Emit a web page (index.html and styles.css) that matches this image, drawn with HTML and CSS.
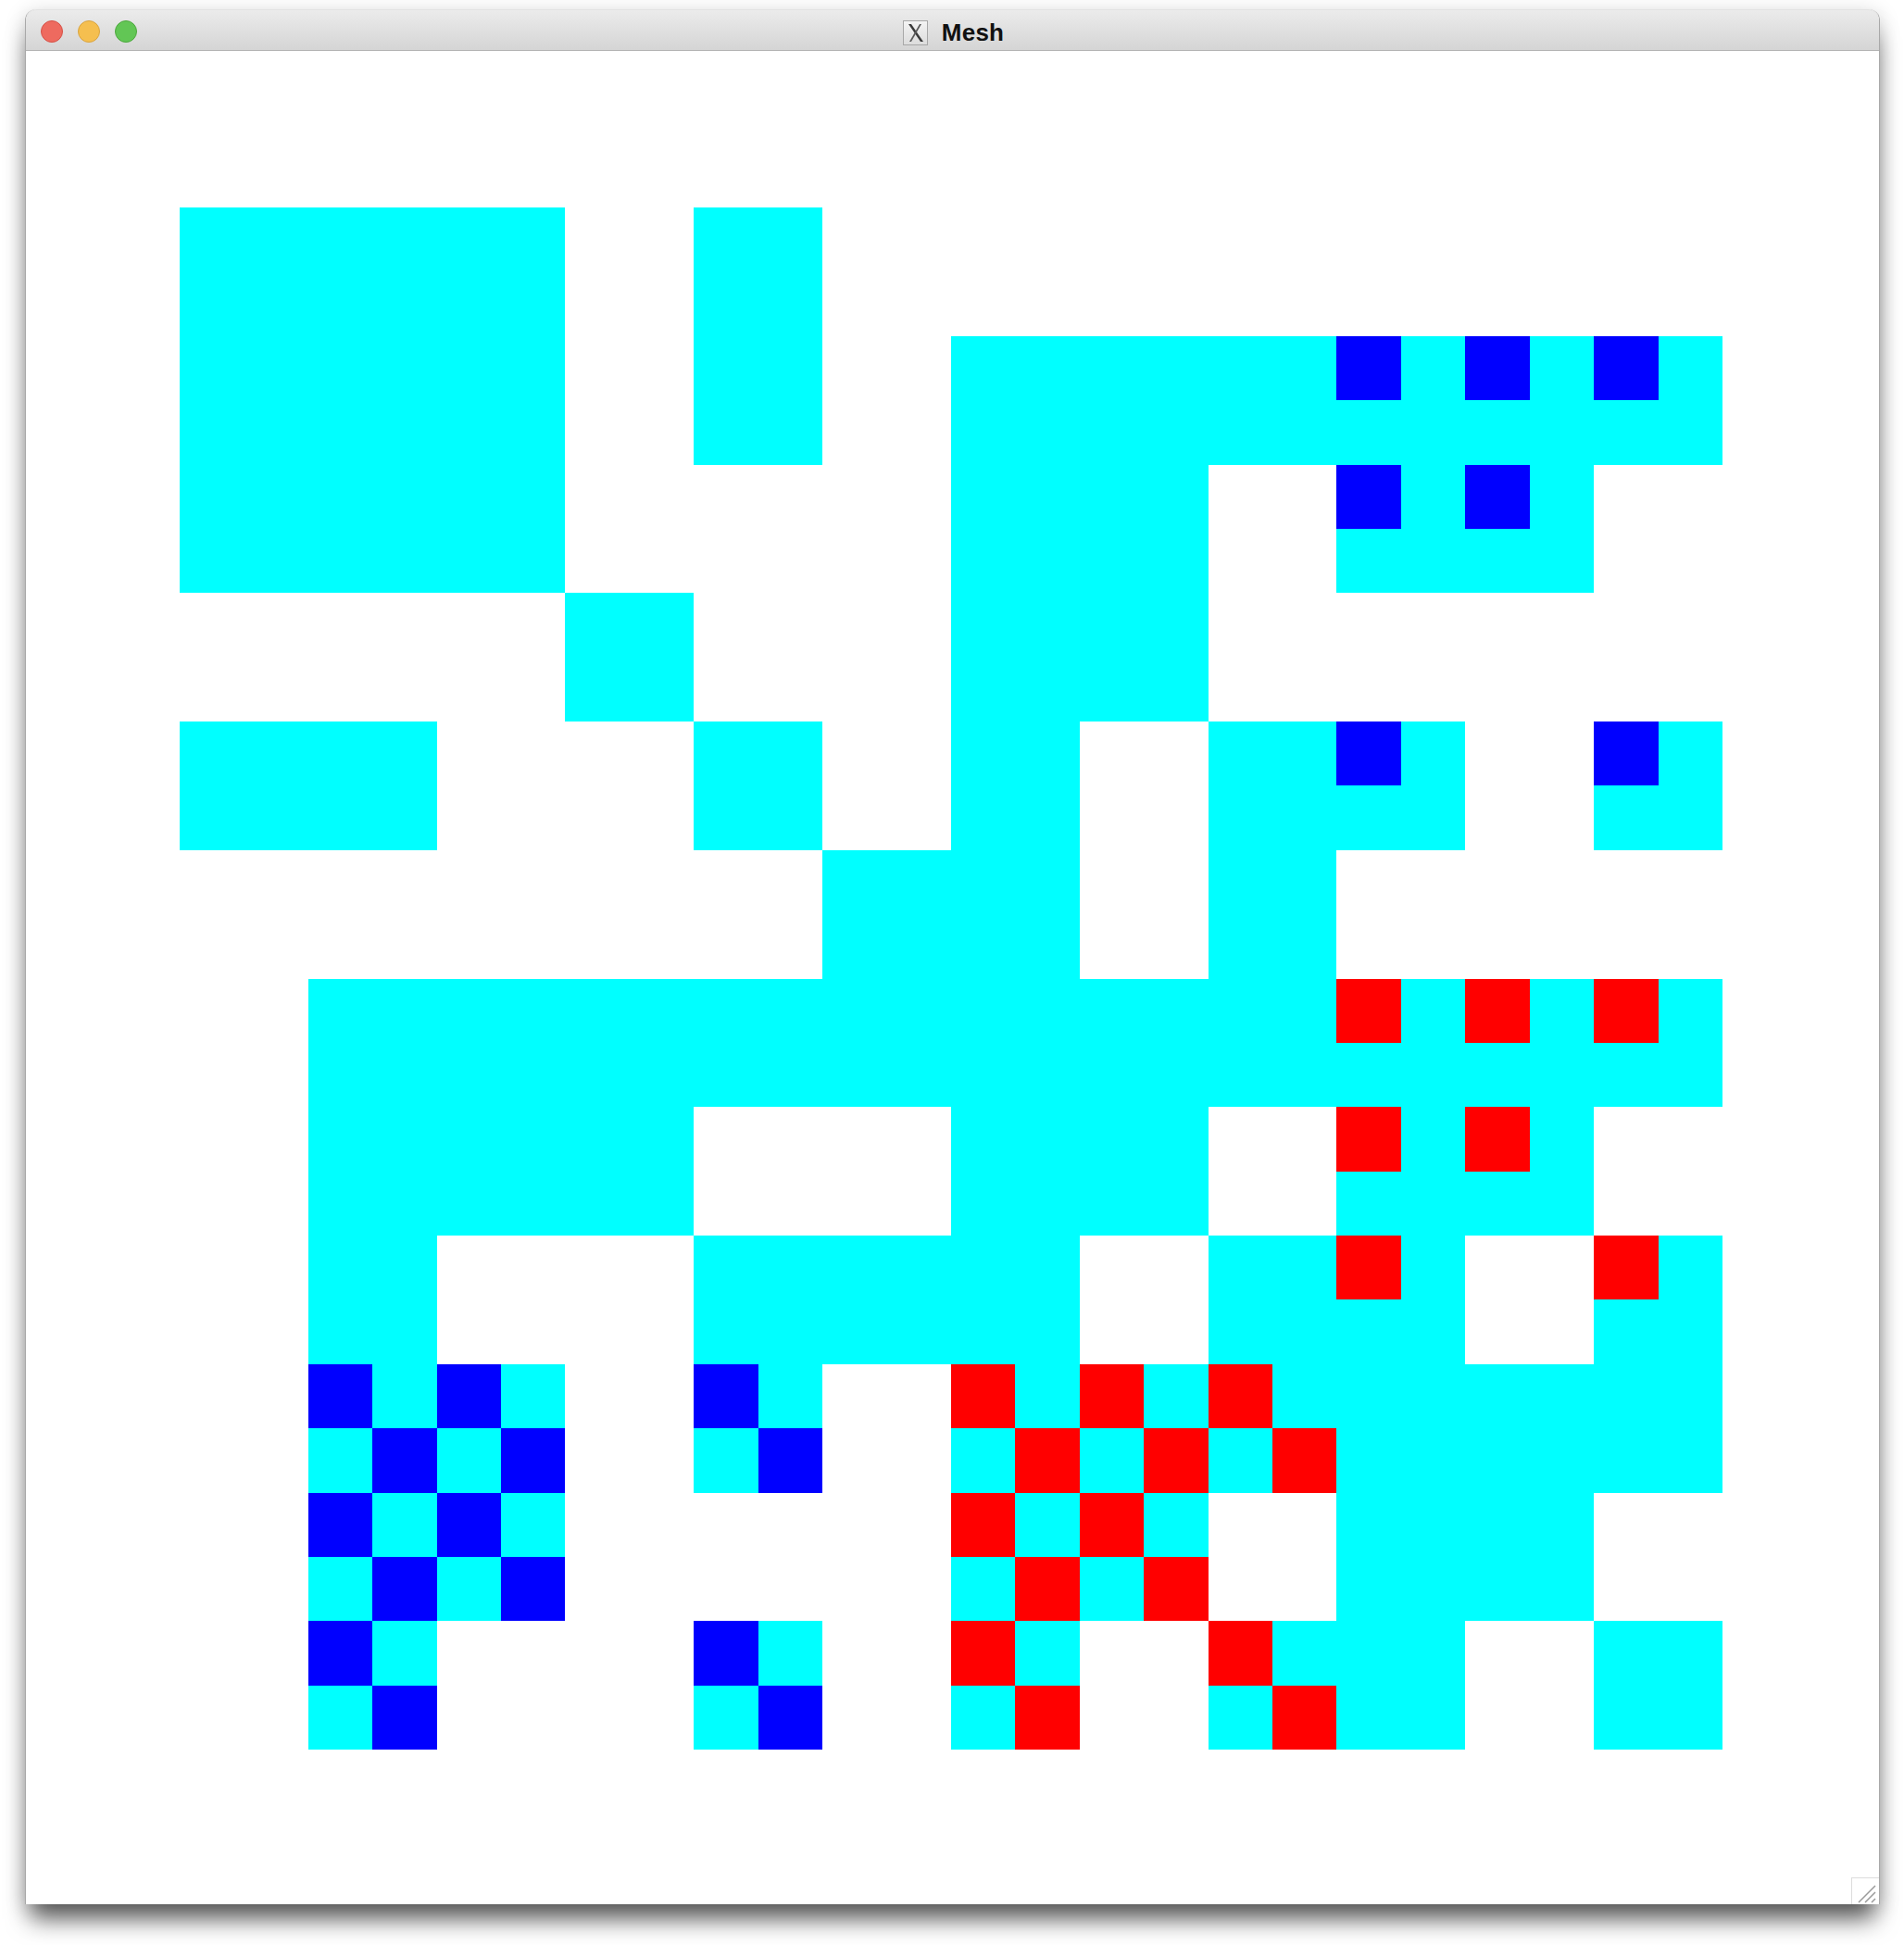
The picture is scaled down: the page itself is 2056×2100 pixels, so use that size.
FILE: index.html
```html
<!DOCTYPE html>
<html>
<head>
<meta charset="utf-8">
<title>Mesh</title>
<link rel="stylesheet" href="styles.css">
</head>
<body>
<div class="window">
  <div class="titlebar">
    <div class="lights">
      <span class="light red"></span>
      <span class="light yellow"></span>
      <span class="light green"></span>
    </div>
    <div class="title">
      <svg class="xicon" width="27" height="27" viewBox="0 0 27 27">
        <defs>
          <linearGradient id="xg" x1="0" y1="0" x2="0" y2="1">
            <stop offset="0" stop-color="#f4f4f4"/>
            <stop offset="1" stop-color="#dcdcdc"/>
          </linearGradient>
        </defs>
        <rect x="0.5" y="0.5" width="26" height="26" fill="url(#xg)" stroke="#a8a8a8"/>
        <path d="M6 4 L19 23 L22 23 L9 4 Z" fill="#3a3a3a"/>
        <path d="M18 4 L20 4 L9 23 L7 23 Z" fill="#5a5a5a"/>
      </svg>
      <span class="name">Mesh</span>
    </div>
  </div>
  <div class="content">
    <div class="mesh">
      <!-- row 0 -->
      <div class="c"></div><div class="c"></div><div class="c"></div><div class="e"></div><div class="c"></div><div class="e"></div><div class="e"></div><div class="e"></div><div class="e"></div><div class="e"></div><div class="e"></div><div class="e"></div>
      <!-- row 1 -->
      <div class="c"></div><div class="c"></div><div class="c"></div><div class="e"></div><div class="c"></div><div class="e"></div><div class="c"></div><div class="c"></div><div class="c"></div>
      <div class="c quad"><i class="blue"></i><i></i><i></i><i></i></div>
      <div class="c quad"><i class="blue"></i><i></i><i></i><i></i></div>
      <div class="c quad"><i class="blue"></i><i></i><i></i><i></i></div>
      <!-- row 2 -->
      <div class="c"></div><div class="c"></div><div class="c"></div><div class="e"></div><div class="e"></div><div class="e"></div><div class="c"></div><div class="c"></div><div class="e"></div>
      <div class="c quad"><i class="blue"></i><i></i><i></i><i></i></div>
      <div class="c quad"><i class="blue"></i><i></i><i></i><i></i></div>
      <div class="e"></div>
      <!-- row 3 -->
      <div class="e"></div><div class="e"></div><div class="e"></div><div class="c"></div><div class="e"></div><div class="e"></div><div class="c"></div><div class="c"></div><div class="e"></div><div class="e"></div><div class="e"></div><div class="e"></div>
      <!-- row 4 -->
      <div class="c"></div><div class="c"></div><div class="e"></div><div class="e"></div><div class="c"></div><div class="e"></div><div class="c"></div><div class="e"></div><div class="c"></div>
      <div class="c quad"><i class="blue"></i><i></i><i></i><i></i></div>
      <div class="e"></div>
      <div class="c quad"><i class="blue"></i><i></i><i></i><i></i></div>
      <!-- row 5 -->
      <div class="e"></div><div class="e"></div><div class="e"></div><div class="e"></div><div class="e"></div><div class="c"></div><div class="c"></div><div class="e"></div><div class="c"></div><div class="e"></div><div class="e"></div><div class="e"></div>
      <!-- row 6 -->
      <div class="e"></div><div class="c"></div><div class="c"></div><div class="c"></div><div class="c"></div><div class="c"></div><div class="c"></div><div class="c"></div><div class="c"></div>
      <div class="c quad"><i class="red"></i><i></i><i></i><i></i></div>
      <div class="c quad"><i class="red"></i><i></i><i></i><i></i></div>
      <div class="c quad"><i class="red"></i><i></i><i></i><i></i></div>
      <!-- row 7 -->
      <div class="e"></div><div class="c"></div><div class="c"></div><div class="c"></div><div class="e"></div><div class="e"></div><div class="c"></div><div class="c"></div><div class="e"></div>
      <div class="c quad"><i class="red"></i><i></i><i></i><i></i></div>
      <div class="c quad"><i class="red"></i><i></i><i></i><i></i></div>
      <div class="e"></div>
      <!-- row 8 -->
      <div class="e"></div><div class="c"></div><div class="e"></div><div class="e"></div><div class="c"></div><div class="c"></div><div class="c"></div><div class="e"></div><div class="c"></div>
      <div class="c quad"><i class="red"></i><i></i><i></i><i></i></div>
      <div class="e"></div>
      <div class="c quad"><i class="red"></i><i></i><i></i><i></i></div>
      <!-- row 9 -->
      <div class="e"></div>
      <div class="c quad"><i class="blue"></i><i></i><i></i><i class="blue"></i></div>
      <div class="c quad"><i class="blue"></i><i></i><i></i><i class="blue"></i></div>
      <div class="e"></div>
      <div class="c quad"><i class="blue"></i><i></i><i></i><i class="blue"></i></div>
      <div class="e"></div>
      <div class="c quad"><i class="red"></i><i></i><i></i><i class="red"></i></div>
      <div class="c quad"><i class="red"></i><i></i><i></i><i class="red"></i></div>
      <div class="c quad"><i class="red"></i><i></i><i></i><i class="red"></i></div>
      <div class="c"></div><div class="c"></div><div class="c"></div>
      <!-- row 10 -->
      <div class="e"></div>
      <div class="c quad"><i class="blue"></i><i></i><i></i><i class="blue"></i></div>
      <div class="c quad"><i class="blue"></i><i></i><i></i><i class="blue"></i></div>
      <div class="e"></div><div class="e"></div><div class="e"></div>
      <div class="c quad"><i class="red"></i><i></i><i></i><i class="red"></i></div>
      <div class="c quad"><i class="red"></i><i></i><i></i><i class="red"></i></div>
      <div class="e"></div>
      <div class="c"></div><div class="c"></div><div class="e"></div>
      <!-- row 11 -->
      <div class="e"></div>
      <div class="c quad"><i class="blue"></i><i></i><i></i><i class="blue"></i></div>
      <div class="e"></div><div class="e"></div>
      <div class="c quad"><i class="blue"></i><i></i><i></i><i class="blue"></i></div>
      <div class="e"></div>
      <div class="c quad"><i class="red"></i><i></i><i></i><i class="red"></i></div>
      <div class="e"></div>
      <div class="c quad"><i class="red"></i><i></i><i></i><i class="red"></i></div>
      <div class="c"></div><div class="e"></div><div class="c"></div>
    </div>
    <div class="grip">
      <svg width="30" height="29" viewBox="0 0 30 29">
        <path d="M8 27 L26 9 M15 27 L26 16 M22 27 L26 23" stroke="#9a9a9a" stroke-width="1.5" fill="none"/>
      </svg>
    </div>
  </div>
</div>
</body>
</html>
```
FILE: styles.css
```css
html, body {
  margin: 0;
  padding: 0;
  background: #ffffff;
}
body {
  width: 2056px;
  height: 2100px;
  overflow: hidden;
  font-family: "Liberation Sans", Arial, sans-serif;
}
.window {
  margin: 10px 0 0 27px;
  width: 2003px;
  border-left: 1px solid #a9a9a9;
  border-right: 1px solid #a9a9a9;
  border-radius: 12px 12px 0 0;
  box-shadow: 0 22px 26px -6px rgba(0, 0, 0, 0.62), 0 4px 22px rgba(0, 0, 0, 0.18);
  background: #ffffff;
  box-sizing: border-box;
}
.titlebar {
  height: 45px;
  box-sizing: border-box;
  border-radius: 12px 12px 0 0;
  background: linear-gradient(#ebebeb, #d5d5d5);
  border-top: 1px solid #e2e2e2;
  border-bottom: 1px solid #b3b3b3;
  display: flex;
  align-items: center;
  position: relative;
}
.lights {
  display: flex;
  gap: 16px;
  padding-left: 16px;
  margin-top: 2px;
}
.light {
  width: 24px;
  height: 24px;
  border-radius: 50%;
  box-sizing: border-box;
}
.light.red { background: #ee6a5f; border: 1px solid #d65248; }
.light.yellow { background: #f5bf4f; border: 1px solid #d9a441; }
.light.green { background: #62c655; border: 1px solid #4da83e; }
.title {
  position: absolute;
  left: 0;
  right: 0;
  top: 0;
  bottom: 0;
  display: flex;
  align-items: center;
  justify-content: center;
  gap: 15px;
  padding-left: 2px;
  padding-top: 5px;
}
.xicon { display: block; }
.name {
  font-weight: bold;
  font-size: 26px;
  color: #111;
  letter-spacing: 0.2px;
}
.content {
  height: 2001px;
  padding: 169px 0 0 166px;
  box-sizing: border-box;
  position: relative;
}
.mesh {
  width: 1666px;
  height: 1665px;
  display: grid;
  grid-template-columns: repeat(12, 1fr);
  grid-template-rows: repeat(12, 1fr);
}
.c { background: #00ffff; }
.e { background: transparent; }
.quad {
  display: grid;
  grid-template-columns: 1fr 1fr;
  grid-template-rows: 1fr 1fr;
}
.quad i { display: block; }
.quad i.blue { background: #0000ff; }
.quad i.red { background: #ff0000; }
.grip {
  position: absolute;
  right: 0;
  bottom: 0;
  width: 30px;
  height: 29px;
  border-top: 1px solid #dcdcdc;
  border-left: 1px solid #dcdcdc;
  box-sizing: border-box;
}
.grip svg { display: block; position: absolute; right: 0; bottom: 0; }
```
